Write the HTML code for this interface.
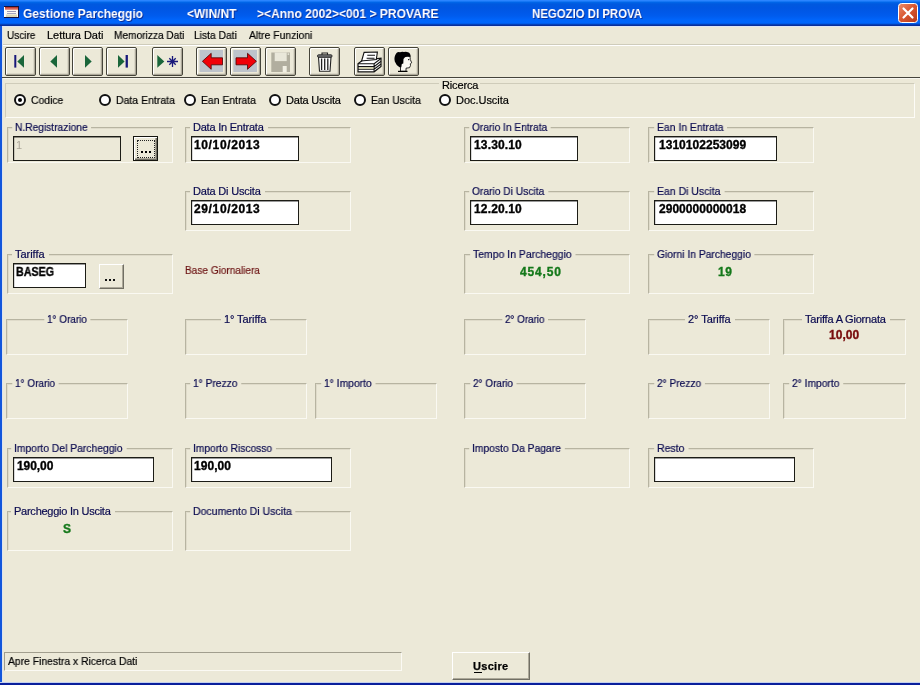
<!DOCTYPE html>
<html><head><meta charset="utf-8"><title>Gestione Parcheggio</title>
<style>
*{box-sizing:border-box;margin:0;padding:0}
html,body{width:920px;height:685px;overflow:hidden;background:#ece9d8;font-family:"Liberation Sans",sans-serif;font-size:11px;color:#000}
#win{position:absolute;left:0;top:0;width:920px;height:685px;background:#ece9d8;overflow:hidden}
#title{position:absolute;left:0;top:0;width:920px;height:26px;background:linear-gradient(to bottom,#2a85ff 0,#2a85ff 1px,#0068ea 2px,#0059df 4px,#0056e2 8px,#0058e8 12px,#005cee 16px,#0065fb 20px,#0066fc 23px,#0052d8 24px,#0a2f9a 25px,#0a2f9a 26px)}
.x{position:absolute;white-space:pre;line-height:1;will-change:transform}
.ln{position:absolute}
.tb{position:absolute;top:47px;width:31px;height:29px;background:#ece9d8;border:1px solid #45443a;border-radius:2px;box-shadow:inset 1px 1px 0 #fff,inset -1px -1px 0 #aca899,inset -2px -2px 0 #dbd8c8}
.tb svg{position:absolute;left:-1px;top:-1px}
.gb{position:absolute;border:1px solid;border-color:#b7b4a1 #faf9f2 #faf9f2 #b7b4a1;box-shadow:inset 1px 1px 0 rgba(183,180,161,.25)}
.inp{position:absolute;background:#fff;border:1px solid #1c1c16;box-shadow:inset 0 1px 0 rgba(0,0,0,.4),inset 1px 0 0 rgba(0,0,0,.15)}
.rb{position:absolute;top:94px;width:12px;height:12px;border:2px solid #111;border-radius:50%;background:#fff}
.btn{position:absolute;background:#ece9d8;border:1px solid;border-color:#fff #716f64 #716f64 #fff;box-shadow:inset -1px -1px 0 #aca899}
</style></head><body>
<div id="win">
<div id="title">
<svg style="position:absolute;left:4px;top:6px" width="15" height="12" viewBox="0 0 15 12"><defs><linearGradient id="ig" x1="0" y1="0" x2="0" y2="1"><stop offset="0" stop-color="#b5241c"/><stop offset="1" stop-color="#f2a495"/></linearGradient></defs><rect x="0" y="0" width="15" height="12" fill="#14123a"/><rect x="0" y="1" width="1" height="10" fill="#fff"/><rect x="1" y="1" width="13" height="10" fill="#fbfaf2"/><rect x="1" y="1" width="13" height="3" fill="url(#ig)"/><rect x="3" y="5" width="9" height="1" fill="#9a9ab5"/><rect x="3" y="7" width="9" height="1" fill="#a5a5bd"/><rect x="2" y="8.5" width="11" height="2.5" fill="#dbd8b6"/></svg>
<svg style="position:absolute;left:898px;top:3px" width="20" height="20" viewBox="0 0 20 20"><defs><linearGradient id="cg" x1="0" y1="0" x2="1" y2="1"><stop offset="0" stop-color="#ea8e6c"/><stop offset="0.5" stop-color="#d8542e"/><stop offset="1" stop-color="#b4381a"/></linearGradient></defs><rect x="0.5" y="0.5" width="19" height="19" rx="3" fill="url(#cg)" stroke="#fff" stroke-width="1"/><path d="M5.5 5.5 L14.5 14.5 M14.5 5.5 L5.5 14.5" stroke="#fff" stroke-width="2.2" stroke-linecap="round"/></svg>
</div>
<div class="ln" style="left:0px;top:26px;width:920px;height:1px;background:#dfe7f6"></div>
<div class="ln" style="left:0px;top:26px;width:2px;height:659px;background:#1256dc"></div>
<div class="ln" style="left:2px;top:27px;width:1px;height:655px;background:#dde3ee"></div>
<div class="ln" style="left:0px;top:682px;width:920px;height:1px;background:#c3d0ee"></div>
<div class="ln" style="left:0px;top:683px;width:920px;height:2px;background:#0a1f9c"></div>
<div class="ln" style="left:3px;top:44px;width:917px;height:1px;background:#cfccbb"></div>
<div class="ln" style="left:3px;top:45px;width:917px;height:1px;background:#fff"></div>
<div class="ln" style="left:2px;top:77px;width:918px;height:1px;background:#45443c"></div>
<div class="ln" style="left:3px;top:78px;width:917px;height:1px;background:#f7f6ef"></div>
<div class="tb" style="left:5px"><svg width="31" height="29" viewBox="0 0 31 29"><rect x="9.3" y="8" width="2" height="12.6" fill="#18187a"/><path d="M19 8 L19 20.8 L12.3 14.4 Z" fill="#1a663a"/></svg></div>
<div class="tb" style="left:39px"><svg width="31" height="29" viewBox="0 0 31 29"><path d="M18 8 L18 20.8 L11.3 14.4 Z" fill="#1a663a"/></svg></div>
<div class="tb" style="left:72px"><svg width="31" height="29" viewBox="0 0 31 29"><path d="M13 8 L13 20.8 L19.7 14.4 Z" fill="#1a663a"/></svg></div>
<div class="tb" style="left:106px"><svg width="31" height="29" viewBox="0 0 31 29"><path d="M12 8 L12 20.8 L18.6 14.4 Z" fill="#1a663a"/><rect x="19.6" y="8" width="2.3" height="12.6" fill="#18187a"/></svg></div>
<div class="tb" style="left:152px"><svg width="31" height="29" viewBox="0 0 31 29"><path d="M5.3 8 L5.3 20.8 L12.3 14.4 Z" fill="#1a663a"/><path d="M20.5 9 V20 M15 14.5 H26 M17.3 11.3 L23.7 17.7 M23.7 11.3 L17.3 17.7" stroke="#18187a" stroke-width="1.3" fill="none"/></svg></div>
<div class="tb" style="left:196px"><svg width="31" height="29" viewBox="0 0 31 29"><rect x="3.5" y="3" width="23.5" height="22" fill="#bdc3cb"/><path d="M6.4 14.3 L15.2 6.3 L15.2 10.8 L26.5 10.8 L26.5 17.8 L15.2 17.8 L15.2 22.3 Z" fill="#f00008" stroke="#4a0000" stroke-width="0.8"/></svg></div>
<div class="tb" style="left:230px"><svg width="31" height="29" viewBox="0 0 31 29"><rect x="3.3" y="3" width="23.7" height="22" fill="#bdc3cb"/><path d="M26.4 14.3 L17.5 6.3 L17.5 10.8 L6 10.8 L6 17.8 L17.5 17.8 L17.5 22.3 Z" fill="#f00008" stroke="#4a0000" stroke-width="0.8"/></svg></div>
<div class="tb" style="left:265px"><svg width="31" height="29" viewBox="0 0 31 29"><rect x="6.3" y="5.5" width="18.7" height="19.5" fill="#b1ae9f"/><rect x="9.7" y="5.5" width="12" height="8.6" fill="#e9e7da"/><rect x="22.6" y="6.3" width="1.6" height="1.6" fill="#e9e7da"/><rect x="17.7" y="19" width="4" height="6" fill="#f1efe3"/></svg></div>
<div class="tb" style="left:309px"><svg width="31" height="29" viewBox="0 0 31 29"><path d="M9.5 10 H22 L21 24.2 H10.5 Z" fill="#fff" stroke="#222" stroke-width="1.1"/><path d="M13 8 V6 H18.5 V8" fill="none" stroke="#222" stroke-width="1.1"/><rect x="8.5" y="7.8" width="14.5" height="2.4" rx="1" fill="#777" stroke="#222" stroke-width="0.9"/><path d="M12.6 11.5 V23 M15.7 11.5 V23 M18.8 11.5 V23" stroke="#222" stroke-width="1.3"/></svg></div>
<div class="tb" style="left:354px"><svg width="31" height="29" viewBox="0 0 31 29"><path d="M4 16.7 L8.5 13.3 L27 11.2 L27 19.5 L20.1 24.8 L4 24.8 Z" fill="#fff" stroke="#111" stroke-width="1.2"/><path d="M10.1 5.4 L23.4 5 L22.3 12.6 L7.6 14 Z" fill="#fff" stroke="#111" stroke-width="1.1"/><path d="M13.3 8.2 H21 M12.6 11.2 H20.5" stroke="#111" stroke-width="1.1"/><path d="M4 16.7 L20.1 16.7 L27 11.5 M20.1 16.7 V24.8 M4 19.6 H20.1 L27 14.3 M4 22.2 H20.1 L27 17" stroke="#111" stroke-width="1.1" fill="none"/><path d="M5 21 H19.5" stroke="#d8d48a" stroke-width="0.9"/></svg></div>
<div class="tb" style="left:388px"><svg width="31" height="29" viewBox="0 0 31 29"><path d="M13 9 L22 9.5 L22.3 12.5 L23.7 15.8 L22.3 16.8 L22.5 18.5 L21.5 20.7 L18 21.2 L18 24.3 L12.5 24.3 L12.5 18 Z" fill="#fbfaf2" stroke="#000" stroke-width="0.8"/><path d="M8.5 6 Q10 4.5 12 5.2 Q14 4.2 16 5 Q18 4.2 20 5.2 Q22.5 6 22.8 9.8 L19.5 9.3 L17 10.2 L15.5 12 L15.3 16.5 L13.8 17 L13.3 20.3 L11.5 20.3 Q8 18 6.8 14.5 Q5.5 10 8.5 6 Z" fill="#000"/><rect x="20" y="12" width="1.3" height="1.2" fill="#222"/><path d="M10 24.4 H19.5" stroke="#000" stroke-width="1.2"/></svg></div>
<div class="gb" style="left:5px;top:83px;width:910px;height:35px;border-color:#cfccba #fdfcf7 #fdfcf7 #cfccba;box-shadow:none"></div>
<div class="ln" style="left:439px;top:82px;width:41px;height:4px;background:#ece9d8"></div>
<div class="rb" style="left:14px"><div style="position:absolute;left:2px;top:2px;width:4px;height:4px;border-radius:50%;background:#000"></div></div>
<div class="rb" style="left:99px"></div>
<div class="rb" style="left:184px"></div>
<div class="rb" style="left:269px"></div>
<div class="rb" style="left:354px"></div>
<div class="rb" style="left:439px"></div>
<div class="gb" style="left:7px;top:127px;width:166px;height:36px"></div>
<div class="gb" style="left:185px;top:127px;width:166px;height:36px"></div>
<div class="gb" style="left:464px;top:127px;width:166px;height:36px"></div>
<div class="gb" style="left:648px;top:127px;width:166px;height:36px"></div>
<div class="gb" style="left:185px;top:191px;width:166px;height:40px"></div>
<div class="gb" style="left:464px;top:191px;width:166px;height:40px"></div>
<div class="gb" style="left:648px;top:191px;width:166px;height:40px"></div>
<div class="gb" style="left:7px;top:254px;width:166px;height:40px"></div>
<div class="gb" style="left:464px;top:254px;width:166px;height:40px"></div>
<div class="gb" style="left:648px;top:254px;width:166px;height:40px"></div>
<div class="gb" style="left:6px;top:319px;width:122px;height:36px"></div>
<div class="gb" style="left:185px;top:319px;width:122px;height:36px"></div>
<div class="gb" style="left:464px;top:319px;width:122px;height:36px"></div>
<div class="gb" style="left:648px;top:319px;width:122px;height:36px"></div>
<div class="gb" style="left:783px;top:319px;width:123px;height:36px"></div>
<div class="gb" style="left:6px;top:383px;width:122px;height:36px"></div>
<div class="gb" style="left:185px;top:383px;width:122px;height:36px"></div>
<div class="gb" style="left:315px;top:383px;width:122px;height:36px"></div>
<div class="gb" style="left:464px;top:383px;width:122px;height:36px"></div>
<div class="gb" style="left:648px;top:383px;width:122px;height:36px"></div>
<div class="gb" style="left:783px;top:383px;width:123px;height:36px"></div>
<div class="gb" style="left:7px;top:448px;width:166px;height:40px"></div>
<div class="gb" style="left:185px;top:448px;width:166px;height:40px"></div>
<div class="gb" style="left:464px;top:448px;width:166px;height:40px"></div>
<div class="gb" style="left:648px;top:448px;width:166px;height:40px"></div>
<div class="gb" style="left:7px;top:511px;width:166px;height:40px"></div>
<div class="gb" style="left:185px;top:511px;width:166px;height:40px"></div>
<div class="inp" style="left:13px;top:136px;width:108px;height:25px;background:#ece9d8"></div>
<div class="inp" style="left:191px;top:136px;width:108px;height:25px;"></div>
<div class="inp" style="left:470px;top:136px;width:108px;height:25px;"></div>
<div class="inp" style="left:654px;top:136px;width:123px;height:25px;"></div>
<div class="inp" style="left:191px;top:200px;width:108px;height:25px;"></div>
<div class="inp" style="left:470px;top:200px;width:108px;height:25px;"></div>
<div class="inp" style="left:654px;top:200px;width:123px;height:25px;"></div>
<div class="inp" style="left:13px;top:263px;width:73px;height:25px;"></div>
<div class="inp" style="left:13px;top:457px;width:141px;height:25px;"></div>
<div class="inp" style="left:191px;top:457px;width:141px;height:25px;"></div>
<div class="inp" style="left:654px;top:457px;width:141px;height:25px;"></div>
<div class="btn" style="left:133px;top:136px;width:25px;height:25px;border-color:#15150f;box-shadow:inset 1px 1px 0 #fff,inset -1px -1px 0 #716f64,inset -2px -2px 0 #aca899"><div style="position:absolute;left:3px;top:3px;width:18px;height:18px;border:1px dotted #222"></div><div class="ln" style="left:7px;top:14px;width:2px;height:2px;background:#000"></div><div class="ln" style="left:11px;top:14px;width:2px;height:2px;background:#000"></div><div class="ln" style="left:15px;top:14px;width:2px;height:2px;background:#000"></div></div>
<div class="btn" style="left:99px;top:264px;width:25px;height:25px;"><div class="ln" style="left:5px;top:14px;width:2px;height:1.5px;background:#111"></div><div class="ln" style="left:9px;top:14px;width:2px;height:1.5px;background:#111"></div><div class="ln" style="left:13px;top:14px;width:2px;height:1.5px;background:#111"></div></div>
<div style="position:absolute;left:4px;top:652px;width:398px;height:19px;border:1px solid;border-color:#a19e8e #fbfaf4 #fbfaf4 #a19e8e"></div>
<div class="btn" style="left:452px;top:652px;width:78px;height:28px;"><div class="ln" style="left:21px;top:19px;width:8px;height:1px;background:#000"></div></div>
<span class="x" style="left:23.48px;top:7.00px;font-size:13px;color:#fff;transform:scaleX(0.9231);transform-origin:0 0;font-weight:bold;text-shadow:1px 1px 0 #0b2f99">Gestione Parcheggio</span>
<span class="x" style="left:187.48px;top:7.00px;font-size:13px;color:#fff;transform:scaleX(0.9206);transform-origin:0 0;font-weight:bold;text-shadow:1px 1px 0 #0b2f99">&lt;WIN/NT</span>
<span class="x" style="left:257.48px;top:7.00px;font-size:13px;color:#fff;transform:scaleX(0.9264);transform-origin:0 0;font-weight:bold;text-shadow:1px 1px 0 #0b2f99">&gt;&lt;Anno 2002&gt;&lt;001 &gt; PROVARE</span>
<span class="x" style="left:532.48px;top:7.00px;font-size:13px;color:#fff;transform:scaleX(0.8772);transform-origin:0 0;font-weight:bold;text-shadow:1px 1px 0 #0b2f99">NEGOZIO DI PROVA</span>
<span class="x" style="left:7.06px;top:29.69px;font-size:11px;color:#000;transform:scaleX(0.9104);transform-origin:0 0;-webkit-text-stroke:0.2px;">Uscire</span>
<span class="x" style="left:46.56px;top:29.69px;font-size:11px;color:#000;letter-spacing:-0.045px;-webkit-text-stroke:0.2px;">Lettura Dati</span>
<span class="x" style="left:113.56px;top:29.69px;font-size:11px;color:#000;transform:scaleX(0.9211);transform-origin:0 0;-webkit-text-stroke:0.2px;">Memorizza Dati</span>
<span class="x" style="left:194.06px;top:29.69px;font-size:11px;color:#000;transform:scaleX(0.9350);transform-origin:0 0;-webkit-text-stroke:0.2px;">Lista Dati</span>
<span class="x" style="left:248.56px;top:29.69px;font-size:11px;color:#000;transform:scaleX(0.9422);transform-origin:0 0;-webkit-text-stroke:0.2px;">Altre Funzioni</span>
<span class="x" style="left:441.56px;top:79.69px;font-size:11px;color:#000;letter-spacing:-0.153px;-webkit-text-stroke:0.2px;">Ricerca</span>
<span class="x" style="left:30.56px;top:94.69px;font-size:11px;color:#000;transform:scaleX(0.9454);transform-origin:0 0;-webkit-text-stroke:0.2px;">Codice</span>
<span class="x" style="left:115.56px;top:94.69px;font-size:11px;color:#000;transform:scaleX(0.9533);transform-origin:0 0;-webkit-text-stroke:0.2px;">Data Entrata</span>
<span class="x" style="left:200.56px;top:94.69px;font-size:11px;color:#000;transform:scaleX(0.9447);transform-origin:0 0;-webkit-text-stroke:0.2px;">Ean Entrata</span>
<span class="x" style="left:285.56px;top:94.69px;font-size:11px;color:#000;letter-spacing:-0.198px;-webkit-text-stroke:0.2px;">Data Uscita</span>
<span class="x" style="left:370.56px;top:94.69px;font-size:11px;color:#000;transform:scaleX(0.9375);transform-origin:0 0;-webkit-text-stroke:0.2px;">Ean Uscita</span>
<span class="x" style="left:456.06px;top:94.69px;font-size:11px;color:#000;letter-spacing:-0.034px;-webkit-text-stroke:0.2px;">Doc.Uscita</span>
<span class="x" style="left:14.86px;top:122.19px;font-size:11px;color:#0b0b50;transform:scaleX(0.9274);transform-origin:0 0;-webkit-text-stroke:0.2px;background:#ece9d8;box-shadow:-3px 0 0 #ece9d8,4px 0 0 #ece9d8">N.Registrazione</span>
<span class="x" style="left:192.86px;top:122.19px;font-size:11px;color:#0b0b50;letter-spacing:-0.230px;-webkit-text-stroke:0.2px;background:#ece9d8;box-shadow:-3px 0 0 #ece9d8,4px 0 0 #ece9d8">Data In Entrata</span>
<span class="x" style="left:472.26px;top:122.19px;font-size:11px;color:#0b0b50;transform:scaleX(0.9244);transform-origin:0 0;-webkit-text-stroke:0.2px;background:#ece9d8;box-shadow:-3px 0 0 #ece9d8,4px 0 0 #ece9d8">Orario In Entrata</span>
<span class="x" style="left:657.16px;top:122.19px;font-size:11px;color:#0b0b50;transform:scaleX(0.9453);transform-origin:0 0;-webkit-text-stroke:0.2px;background:#ece9d8;box-shadow:-3px 0 0 #ece9d8,4px 0 0 #ece9d8">Ean In Entrata</span>
<span class="x" style="left:192.86px;top:185.69px;font-size:11px;color:#0b0b50;letter-spacing:-0.194px;-webkit-text-stroke:0.2px;background:#ece9d8;box-shadow:-3px 0 0 #ece9d8,4px 0 0 #ece9d8">Data Di Uscita</span>
<span class="x" style="left:472.26px;top:185.69px;font-size:11px;color:#0b0b50;transform:scaleX(0.9311);transform-origin:0 0;-webkit-text-stroke:0.2px;background:#ece9d8;box-shadow:-3px 0 0 #ece9d8,4px 0 0 #ece9d8">Orario Di Uscita</span>
<span class="x" style="left:657.16px;top:185.69px;font-size:11px;color:#0b0b50;transform:scaleX(0.9526);transform-origin:0 0;-webkit-text-stroke:0.2px;background:#ece9d8;box-shadow:-3px 0 0 #ece9d8,4px 0 0 #ece9d8">Ean Di Uscita</span>
<span class="x" style="left:14.86px;top:249.19px;font-size:11px;color:#0b0b50;letter-spacing:-0.031px;-webkit-text-stroke:0.2px;background:#ece9d8;box-shadow:-3px 0 0 #ece9d8,4px 0 0 #ece9d8">Tariffa</span>
<span class="x" style="left:473.26px;top:249.19px;font-size:11px;color:#0b0b50;transform:scaleX(0.9493);transform-origin:0 0;-webkit-text-stroke:0.2px;background:#ece9d8;box-shadow:-3px 0 0 #ece9d8,4px 0 0 #ece9d8">Tempo In Parcheggio</span>
<span class="x" style="left:657.16px;top:249.19px;font-size:11px;color:#0b0b50;transform:scaleX(0.9362);transform-origin:0 0;-webkit-text-stroke:0.2px;background:#ece9d8;box-shadow:-3px 0 0 #ece9d8,4px 0 0 #ece9d8">Giorni In Parcheggio</span>
<span class="x" style="left:46.56px;top:314.19px;font-size:11px;color:#0b0b50;transform:scaleX(0.9035);transform-origin:0 0;-webkit-text-stroke:0.2px;background:#ece9d8;box-shadow:-3px 0 0 #ece9d8,4px 0 0 #ece9d8">1° Orario</span>
<span class="x" style="left:224.26px;top:314.19px;font-size:11px;color:#0b0b50;letter-spacing:-0.096px;-webkit-text-stroke:0.2px;background:#ece9d8;box-shadow:-3px 0 0 #ece9d8,4px 0 0 #ece9d8">1° Tariffa</span>
<span class="x" style="left:504.86px;top:314.19px;font-size:11px;color:#0b0b50;transform:scaleX(0.8944);transform-origin:0 0;-webkit-text-stroke:0.2px;background:#ece9d8;box-shadow:-3px 0 0 #ece9d8,4px 0 0 #ece9d8">2° Orario</span>
<span class="x" style="left:688.26px;top:314.19px;font-size:11px;color:#0b0b50;letter-spacing:-0.062px;-webkit-text-stroke:0.2px;background:#ece9d8;box-shadow:-3px 0 0 #ece9d8,4px 0 0 #ece9d8">2° Tariffa</span>
<span class="x" style="left:804.56px;top:314.19px;font-size:11px;color:#0b0b50;letter-spacing:-0.195px;-webkit-text-stroke:0.2px;background:#ece9d8;box-shadow:-3px 0 0 #ece9d8,4px 0 0 #ece9d8">Tariffa A Giornata</span>
<span class="x" style="left:14.66px;top:378.19px;font-size:11px;color:#0b0b50;transform:scaleX(0.9080);transform-origin:0 0;-webkit-text-stroke:0.2px;background:#ece9d8;box-shadow:-3px 0 0 #ece9d8,4px 0 0 #ece9d8">1° Orario</span>
<span class="x" style="left:193.26px;top:378.19px;font-size:11px;color:#0b0b50;transform:scaleX(0.9282);transform-origin:0 0;-webkit-text-stroke:0.2px;background:#ece9d8;box-shadow:-3px 0 0 #ece9d8,4px 0 0 #ece9d8">1° Prezzo</span>
<span class="x" style="left:323.56px;top:378.19px;font-size:11px;color:#0b0b50;transform:scaleX(0.9372);transform-origin:0 0;-webkit-text-stroke:0.2px;background:#ece9d8;box-shadow:-3px 0 0 #ece9d8,4px 0 0 #ece9d8">1° Importo</span>
<span class="x" style="left:472.56px;top:378.19px;font-size:11px;color:#0b0b50;transform:scaleX(0.9057);transform-origin:0 0;-webkit-text-stroke:0.2px;background:#ece9d8;box-shadow:-3px 0 0 #ece9d8,4px 0 0 #ece9d8">2° Orario</span>
<span class="x" style="left:657.26px;top:378.19px;font-size:11px;color:#0b0b50;transform:scaleX(0.9219);transform-origin:0 0;-webkit-text-stroke:0.2px;background:#ece9d8;box-shadow:-3px 0 0 #ece9d8,4px 0 0 #ece9d8">2° Prezzo</span>
<span class="x" style="left:792.36px;top:378.19px;font-size:11px;color:#0b0b50;transform:scaleX(0.9313);transform-origin:0 0;-webkit-text-stroke:0.2px;background:#ece9d8;box-shadow:-3px 0 0 #ece9d8,4px 0 0 #ece9d8">2° Importo</span>
<span class="x" style="left:14.26px;top:443.19px;font-size:11px;color:#0b0b50;transform:scaleX(0.9387);transform-origin:0 0;-webkit-text-stroke:0.2px;background:#ece9d8;box-shadow:-3px 0 0 #ece9d8,4px 0 0 #ece9d8">Importo Del Parcheggio</span>
<span class="x" style="left:192.86px;top:443.19px;font-size:11px;color:#0b0b50;transform:scaleX(0.9317);transform-origin:0 0;-webkit-text-stroke:0.2px;background:#ece9d8;box-shadow:-3px 0 0 #ece9d8,4px 0 0 #ece9d8">Importo Riscosso</span>
<span class="x" style="left:472.46px;top:443.19px;font-size:11px;color:#0b0b50;transform:scaleX(0.9377);transform-origin:0 0;-webkit-text-stroke:0.2px;background:#ece9d8;box-shadow:-3px 0 0 #ece9d8,4px 0 0 #ece9d8">Imposto Da Pagare</span>
<span class="x" style="left:657.16px;top:443.19px;font-size:11px;color:#0b0b50;transform:scaleX(0.9558);transform-origin:0 0;-webkit-text-stroke:0.2px;background:#ece9d8;box-shadow:-3px 0 0 #ece9d8,4px 0 0 #ece9d8">Resto</span>
<span class="x" style="left:14.26px;top:506.19px;font-size:11px;color:#0b0b50;letter-spacing:-0.248px;-webkit-text-stroke:0.2px;background:#ece9d8;box-shadow:-3px 0 0 #ece9d8,4px 0 0 #ece9d8">Parcheggio In Uscita</span>
<span class="x" style="left:192.86px;top:506.19px;font-size:11px;color:#0b0b50;transform:scaleX(0.9560);transform-origin:0 0;-webkit-text-stroke:0.2px;background:#ece9d8;box-shadow:-3px 0 0 #ece9d8,4px 0 0 #ece9d8">Documento Di Uscita</span>
<span class="x" style="left:184.56px;top:265.19px;font-size:11px;color:#6e1616;transform:scaleX(0.9139);transform-origin:0 0;-webkit-text-stroke:0.2px;">Base Giornaliera</span>
<span class="x" style="left:193.62px;top:138.84px;font-size:12px;color:#000;letter-spacing:0.633px;font-weight:bold;-webkit-text-stroke:0.35px;">10/10/2013</span>
<span class="x" style="left:193.62px;top:202.84px;font-size:12px;color:#000;letter-spacing:0.633px;font-weight:bold;-webkit-text-stroke:0.35px;">29/10/2013</span>
<span class="x" style="left:473.62px;top:138.84px;font-size:12px;color:#000;letter-spacing:0.149px;font-weight:bold;-webkit-text-stroke:0.35px;">13.30.10</span>
<span class="x" style="left:473.62px;top:202.84px;font-size:12px;color:#000;letter-spacing:0.149px;font-weight:bold;-webkit-text-stroke:0.35px;">12.20.10</span>
<span class="x" style="left:658.62px;top:138.84px;font-size:12px;color:#000;letter-spacing:0.033px;font-weight:bold;-webkit-text-stroke:0.35px;">1310102253099</span>
<span class="x" style="left:658.62px;top:202.84px;font-size:12px;color:#000;letter-spacing:0.033px;font-weight:bold;-webkit-text-stroke:0.35px;">2900000000018</span>
<span class="x" style="left:16.32px;top:266.34px;font-size:12px;color:#000;transform:scaleX(0.8939);transform-origin:0 0;font-weight:bold;-webkit-text-stroke:0.35px;">BASEG</span>
<span class="x" style="left:16.92px;top:459.84px;font-size:12px;color:#000;letter-spacing:-0.069px;font-weight:bold;-webkit-text-stroke:0.35px;">190,00</span>
<span class="x" style="left:194.42px;top:459.84px;font-size:12px;color:#000;letter-spacing:0.051px;font-weight:bold;-webkit-text-stroke:0.35px;">190,00</span>
<span class="x" style="left:520.02px;top:266.34px;font-size:12px;color:#14781a;letter-spacing:0.831px;font-weight:bold;-webkit-text-stroke:0.35px;">454,50</span>
<span class="x" style="left:718.22px;top:266.34px;font-size:12px;color:#14781a;letter-spacing:0.501px;font-weight:bold;-webkit-text-stroke:0.35px;">19</span>
<span class="x" style="left:829.02px;top:329.34px;font-size:12px;color:#780c0c;letter-spacing:0.032px;font-weight:bold;-webkit-text-stroke:0.35px;">10,00</span>
<span class="x" style="left:63.32px;top:523.34px;font-size:12px;color:#14781a;letter-spacing:0.000px;font-weight:bold;-webkit-text-stroke:0.35px;">S</span>
<span class="x" style="left:15.56px;top:139.69px;font-size:11px;color:#aca899;letter-spacing:0.000px;">1</span>
<span class="x" style="left:8.06px;top:655.69px;font-size:11px;color:#000;transform:scaleX(0.9406);transform-origin:0 0;-webkit-text-stroke:0.2px;">Apre Finestra x Ricerca Dati</span>
<span class="x" style="left:472.76px;top:661.19px;font-size:11px;color:#000;letter-spacing:0.288px;font-weight:bold;-webkit-text-stroke:0.25px;">Uscire</span>
</div>
</body></html>
